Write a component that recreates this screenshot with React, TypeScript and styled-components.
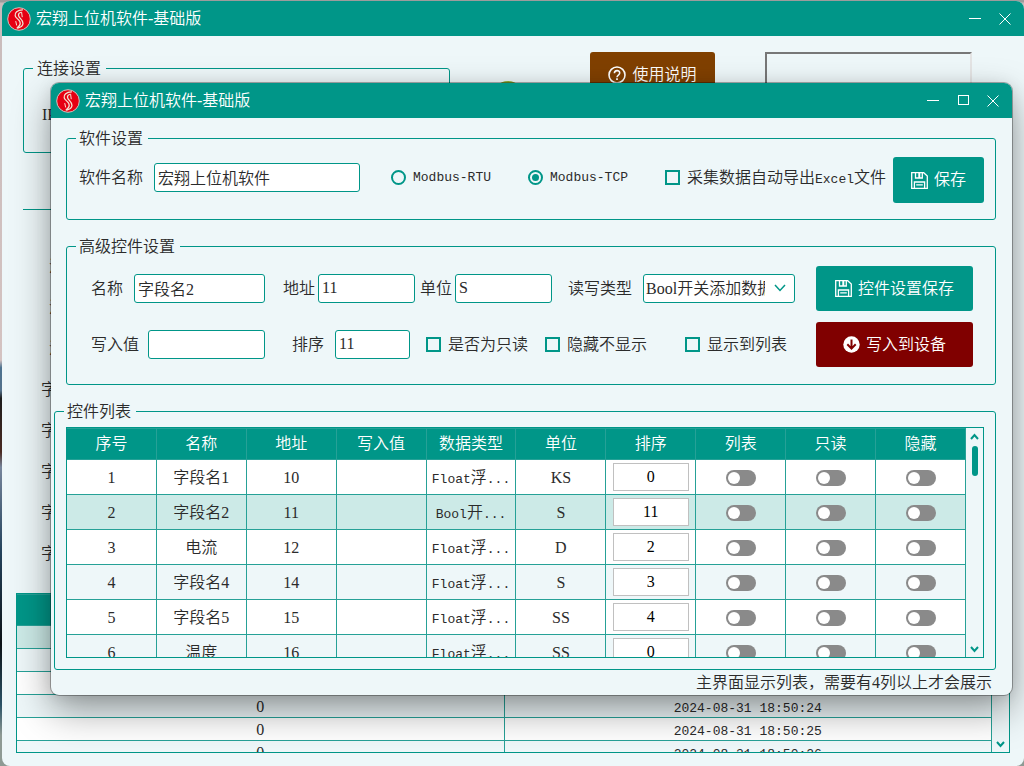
import React from "react";
import styled, { createGlobalStyle } from "styled-components";

const teal = "#009688";
const line = "#26a197";
const paper = "#eef7f9";
const tint = "#cceae7";
const ink = "#2b2b2b";

const GlobalStyle = createGlobalStyle`
  * { box-sizing: border-box; }
  body { margin: 0; }
  body, button, input, select {
    font-family: "Liberation Serif", "Noto Sans CJK SC", serif;
    font-size: 16px;
    font-weight: 350;
    line-height: 20px;
    color: ${ink};
  }
`;

const Desktop = styled.div`
  min-height: 100vh;
  padding: 1px 0 0 2px;
  display: flex;
  background: linear-gradient(#9c9c9c 0 2px, #c9bcbc 3px, #d4c3c1 47%, #4d7390 48%, #54718a 51%, #1d1d1d 52%, #4a2b22 59%, #77869c 61%, #24435c 72%, #0c1216 84%, #2b5266 92%, #8e9a94 96%);
`;

const MainWindow = styled.main`
  position: relative;
  flex: 1;
  min-width: 0;
  height: calc(100vh - 1px);
  display: flex;
  flex-direction: column;
  overflow: hidden;
  border-radius: 8px;
  background: ${paper};
`;

const Dialog = styled.section`
  position: absolute;
  top: 82px;
  left: 49px;
  right: 12px;
  border-radius: 8px;
  background: ${paper};
  box-shadow: 0 0 0 1px rgba(0, 0, 0, 0.3), 0 16px 38px rgba(0, 0, 0, 0.38), 0 2px 16px rgba(0, 0, 0, 0.1);
  & > header { border-radius: 8px 8px 0 0; }
`;

const TitleBar = styled.header`
  flex: none;
  height: 35px;
  padding: 0 4px 0 5px;
  display: flex;
  align-items: center;
  gap: 5px;
  background: ${teal};
  color: #ffffff;
`;

const Title = styled.h1`
  flex: 1;
  margin: 0;
  font-size: 16px;
  font-weight: 350;
  line-height: 20px;
`;

const CaptionButtons = styled.div`
  display: flex;
`;

const CaptionButton = styled.button`
  width: 30px;
  height: 30px;
  padding: 0;
  display: grid;
  place-items: center;
  border: 0;
  background: none;
  color: #ffffff;
`;

const Group = styled.fieldset<{ $top: number; $bottom: number; $wide?: boolean }>`
  min-width: 0;
  margin: 0 0 16px ${(p) => (p.$wide ? 0 : 12)}px;
  padding: ${(p) => p.$top}px 11px ${(p) => p.$bottom}px;
  border: 1px solid ${teal};
  border-radius: 3px;
`;

const Legend = styled.legend`
  margin-left: -2px;
  padding: 0 5px 0 3px;
  line-height: 21px;
`;

const DialogBody = styled.div`
  padding: 10px 16px 0 3px;
  & > fieldset:last-of-type { margin-bottom: 0; }
`;

const Row = styled.div`
  min-width: 0;
  display: flex;
  align-items: center;
`;

const SoftwareRow = styled.div`
  display: flex;
  align-items: flex-start;
  gap: 6px;
  padding-left: 1px;
  & > ${Row} {
    flex: 1;
    height: 41px;
  }
`;

const AdvancedGrid = styled.div`
  display: grid;
  grid-template-columns: minmax(0, 1fr) 157px;
  column-gap: 21px;
  row-gap: 11px;
  padding: 0 11px 0 13px;
`;

const Caption = styled.label<{ $gap: number; $after: number }>`
  flex: none;
  margin-left: ${(p) => p.$gap}px;
  margin-right: ${(p) => p.$after}px;
  white-space: nowrap;
`;

const TextField = styled.input<{ $w: number }>`
  flex: ${(p) => p.$w} 1 ${(p) => p.$w}px;
  width: ${(p) => p.$w}px;
  min-width: 0;
  height: 29px;
  padding: 0 3px 1px;
  border: 1px solid ${teal};
  border-radius: 3px;
  background: #ffffff;
`;

const SelectWrap = styled.div`
  position: relative;
  flex: 152 1 152px;
  min-width: 0;
  svg { position: absolute; right: 9px; top: 10px; pointer-events: none; }
`;

const Select = styled.select`
  display: block;
  width: 100%;
  height: 29px;
  padding: 0 29px 0 2px;
  appearance: none;
  border: 1px solid ${teal};
  border-radius: 3px;
  background: #ffffff;
`;

const Choice = styled.label<{ $w: number; $gap: number }>`
  flex: none;
  width: ${(p) => p.$w}px;
  margin-left: ${(p) => p.$gap}px;
  display: flex;
  align-items: center;
  gap: 7px;
  white-space: nowrap;
`;

const Radio = styled.input`
  width: 15px;
  height: 15px;
  margin: 0;
  display: grid;
  place-items: center;
  appearance: none;
  border: 2px solid ${teal};
  border-radius: 50%;
  &:checked::before {
    content: "";
    width: 7px;
    height: 7px;
    border-radius: 50%;
    background: ${teal};
  }
`;

const Tick = styled.input`
  width: 15px;
  height: 15px;
  margin: 0;
  appearance: none;
  border: 2px solid ${teal};
  &:checked { background: ${teal}; }
`;

const Mono = styled.span`
  font-family: "Liberation Mono", monospace;
  font-size: 13px;
  line-height: 1;
`;

const ActionButton = styled.button<{ $color: string; $w?: number; $h: number }>`
  flex: none;
  width: ${(p) => (p.$w ? `${p.$w}px` : "100%")};
  height: ${(p) => p.$h}px;
  padding: 0;
  display: flex;
  align-items: center;
  justify-content: center;
  gap: 6px;
  border: 0;
  border-radius: 3px;
  background: ${(p) => p.$color};
  color: #ffffff;
`;

const TableFrame = styled.div<{ $h?: number }>`
  display: flex;
  min-height: 0;
  height: ${(p) => (p.$h ? `${p.$h}px` : "auto")};
  border: 1px solid ${teal};
  overflow: hidden;
`;

const TableView = styled.div`
  flex: 1;
  min-width: 0;
  overflow: hidden;
`;

const Table = styled.table<{ $row: number }>`
  width: 100%;
  table-layout: fixed;
  border-collapse: separate;
  border-spacing: 0;
  text-align: center;
  th, td {
    height: ${(p) => p.$row}px;
    padding: 0;
    border-right: 1px solid ${line};
    border-bottom: 1px solid ${line};
    font-weight: 350;
    white-space: nowrap;
  }
  td { padding-top: 1px; }
  th {
    height: 32px;
    border-top: 1px solid ${line};
    background: ${teal};
    color: #ffffff;
  }
`;

const LogTable = styled(Table)`
  td { line-height: 18px; }
`;

const TableRow = styled.tr<{ $bg: string }>`
  background: ${(p) => p.$bg};
`;

const OrderField = styled.input`
  display: block;
  width: calc(100% - 13px);
  height: 28px;
  margin: 0 auto 2px;
  padding: 0;
  border: 1px solid #c0c0c0;
  background: #ffffff;
  color: #000000;
  text-align: center;
`;

const Switch = styled.input`
  display: block;
  width: 30px;
  height: 16px;
  margin: 0 auto;
  padding: 2px;
  appearance: none;
  border-radius: 8px;
  background: #8a8a8a;
  &::before {
    content: "";
    display: block;
    width: 12px;
    height: 12px;
    border-radius: 50%;
    background: #ffffff;
  }
  &:checked { background: ${teal}; }
  &:checked::before { margin-left: 14px; }
`;

const ScrollRail = styled.div`
  flex: none;
  width: 17px;
  padding: 5px 0 4px;
  display: flex;
  flex-direction: column;
  align-items: center;
  gap: 5px;
  background: ${paper};
`;

const ScrollThumb = styled.div`
  width: 6px;
  height: 30px;
  margin-bottom: auto;
  border-radius: 3px;
  background: ${teal};
`;

const ScrollButton = styled.button`
  width: 17px;
  height: 8px;
  padding: 0;
  display: grid;
  place-items: center;
  border: 0;
  background: none;
`;

const Note = styled.p`
  margin: 0;
  padding-right: 4px;
  line-height: 25px;
  text-align: right;
`;

const ConnectionBar = styled.div`
  flex: none;
  height: 173px;
  margin: 0 52px 0 21px;
  padding-top: 16px;
  display: flex;
  align-items: flex-start;
`;

const ConnectionGroup = styled.fieldset`
  flex: none;
  width: 427px;
  height: 95px;
  margin: 6px 0 0;
  padding: 26px 18px 0;
  border: 1px solid ${teal};
  border-radius: 3px;
`;

const ConnectionLegend = styled.legend`
  margin-left: -9px;
  padding: 0 5px 0 4px;
  line-height: 21px;
`;

const StatusLamp = styled.span`
  flex: none;
  width: 32px;
  height: 32px;
  margin: 29px 66px 0 42px;
  border-radius: 50%;
  background: #8fae35;
`;

const SunkenPanel = styled.div`
  flex: 1;
  height: 120px;
  margin-left: 50px;
  border: 2px solid;
  border-color: #777777 #e4e4e4 #e4e4e4 #777777;
`;

const Divider = styled.hr`
  flex: none;
  width: auto;
  height: 1px;
  margin: 0 14px 0 21px;
  border: 0;
  background: ${teal};
`;

const FieldNames = styled.ul`
  flex: none;
  margin: 0;
  padding: 36px 0 19px 39px;
  list-style: none;
  line-height: 41px;
`;

const FieldName = styled.li<{ $indent: number }>`
  height: 41px;
  padding-left: ${(p) => p.$indent}px;
`;

const LogFrame = styled(TableFrame)`
  flex: 1;
  margin: 0 14px 13px;
`;

const LogRail = styled(ScrollRail)`
  justify-content: flex-end;
`;

function Logo() {
  return (
    <svg width="24" height="24" viewBox="0 0 24 24" aria-hidden="true">
      <circle cx="12" cy="12" r="11.3" fill="#e60012" stroke="#cfc4c0" strokeWidth="1" />
      <g fill="none" stroke="#f3e3d3" strokeWidth="1.3" strokeLinecap="round">
        <path d="M15.5 2.8C10.5 3 7.4 5.6 8.2 8.8c.6 2.200 3.600 3.600 4.600 5.800.9 2-.3 4.600-2.600 6.200" />
        <path d="M13.500 5.500c-2 .6-2.600 2.600-1.400 4.400 1.300 2 4.100 3.600 3.900 6.600-.2 2.200-2.200 3.800-5.200 4.500" />
        <path d="M14.600 5.200l.6 4.600M8.800 14.500l.8 3.600" strokeWidth="1" />
      </g>
    </svg>
  );
}

function SaveIcon() {
  return (
    <svg width="17" height="17" viewBox="0 0 17 17" fill="none" stroke="#fff" strokeWidth="1.3" aria-hidden="true">
      <path d="M.7.7h12L16.300 4v12.300H.7z" />
      <path d="M4.500.7v5.300h6.800v-5.300" />
      <path d="M3.400 16.200V10h10.200v6.200M5.200 12.800h6.600" />
      <path d="M8.300 1v5" strokeWidth="2" />
    </svg>
  );
}

function DownIcon() {
  return (
    <svg width="17" height="17" viewBox="0 0 17 17" fill="none" aria-hidden="true">
      <circle cx="8.5" cy="8.5" r="8.2" fill="#fff" />
      <path d="M8.500 3.500v8.600M4.300 8.300l4.200 4.300 4.200-4.300" stroke="#800000" strokeWidth="2" />
    </svg>
  );
}

function HelpIcon() {
  return (
    <svg width="18" height="18" viewBox="0 0 18 18" fill="none" stroke="#fff" strokeWidth="1.6" aria-hidden="true">
      <circle cx="9" cy="9" r="8" />
      <path d="M6.400 7.200c0-3.400 5.300-3.400 5.300-.2 0 2-2.700 2.100-2.700 4.300" />
      <path d="M9 12.300v1.800" strokeWidth="1.8" />
    </svg>
  );
}

function Chevron({ size, up }: { size: number; up?: boolean }) {
  return (
    <svg width={size} height="8" viewBox={`0 0 ${size} 8`} fill="none" stroke={teal} strokeWidth={size > 10 ? 1.5 : 2} aria-hidden="true">
      <path d={up ? `M1 6L${size / 2} 2L${size - 1} 6` : size > 10 ? `M1 1L${size / 2} 6.5L${size - 1} 1` : `M1 2L${size / 2} 6L${size - 1} 2`} />
    </svg>
  );
}

function WindowTitle({ resizable }: { resizable?: boolean }) {
  return (
    <TitleBar>
      <Logo />
      <Title>宏翔上位机软件-基础版</Title>
      <CaptionButtons>
        <CaptionButton aria-label="最小化">
          <svg width="12" height="12" stroke="currentColor"><path d="M0 5.500H12" /></svg>
        </CaptionButton>
        {resizable && (
          <CaptionButton aria-label="最大化">
            <svg width="12" height="12" stroke="currentColor" fill="none"><rect x="1.5" y="0.5" width="10" height="9" /></svg>
          </CaptionButton>
        )}
        <CaptionButton aria-label="关闭">
          <svg width="12" height="12" stroke="currentColor"><path d="M.5.5l11 11M11.500.5l-11 11" /></svg>
        </CaptionButton>
      </CaptionButtons>
    </TitleBar>
  );
}

const headings = ["序号", "名称", "地址", "写入值", "数据类型", "单位", "排序", "列表", "只读", "隐藏"];

const controls = [
  { name: "字段名1", address: 10, type: ["Float", "浮"], unit: "KS", order: 0 },
  { name: "字段名2", address: 11, type: ["Bool", "开"], unit: "S", order: 11 },
  { name: "电流", address: 12, type: ["Float", "浮"], unit: "D", order: 2 },
  { name: "字段名4", address: 14, type: ["Float", "浮"], unit: "S", order: 3 },
  { name: "字段名5", address: 15, type: ["Float", "浮"], unit: "SS", order: 4 },
  { name: "温度", address: 16, type: ["Float", "浮"], unit: "SS", order: 0 },
];

const log = [
  ["", ""],
  ["", ""],
  ["", ""],
  ["0", "2024-08-31 18:50:24"],
  ["0", "2024-08-31 18:50:25"],
  ["0", "2024-08-31 18:50:26"],
];

const fieldNames = ["温", "温", "温", "字", "字", "字", "字", "字"];

function SoftwareSettings() {
  return (
    <Group $top={8} $bottom={16}>
      <Legend>软件设置</Legend>
      <SoftwareRow>
        <Row>
          <Caption htmlFor="app-name" $gap={0} $after={11}>软件名称</Caption>
          <TextField id="app-name" $w={206} defaultValue="宏翔上位机软件" />
          <Choice $w={103} $gap={31}>
            <Radio type="radio" name="protocol" /><Mono>Modbus-RTU</Mono>
          </Choice>
          <Choice $w={103} $gap={34}>
            <Radio type="radio" name="protocol" defaultChecked /><Mono>Modbus-TCP</Mono>
          </Choice>
          <Choice $w={222} $gap={34}>
            <Tick type="checkbox" />
            <span>采集数据自动导出<Mono>Excel</Mono>文件</span>
          </Choice>
        </Row>
        <ActionButton $color={teal} $w={91} $h={46}><SaveIcon />保存</ActionButton>
      </SoftwareRow>
    </Group>
  );
}

function AdvancedSettings() {
  return (
    <Group $top={9} $bottom={17}>
      <Legend>高级控件设置</Legend>
      <AdvancedGrid>
        <Row>
          <Caption htmlFor="name" $gap={0} $after={11}>名称</Caption>
          <TextField id="name" $w={131} defaultValue="字段名2" />
          <Caption htmlFor="address" $gap={18} $after={3}>地址</Caption>
          <TextField id="address" $w={97} defaultValue="11" />
          <Caption htmlFor="unit" $gap={5} $after={3}>单位</Caption>
          <TextField id="unit" $w={97} defaultValue="S" />
          <Caption htmlFor="access" $gap={16} $after={11}>读写类型</Caption>
          <SelectWrap>
            <Select id="access"><option>Bool开关添加数据</option></Select>
            <Chevron size={12} />
          </SelectWrap>
        </Row>
        <ActionButton $color={teal} $h={45}><SaveIcon />控件设置保存</ActionButton>
        <Row>
          <Caption htmlFor="value" $gap={0} $after={9}>写入值</Caption>
          <TextField id="value" $w={117} />
          <Caption htmlFor="order" $gap={27} $after={11}>排序</Caption>
          <TextField id="order" $w={75} defaultValue="11" />
          <Choice $w={102} $gap={16}><Tick type="checkbox" />是否为只读</Choice>
          <Choice $w={102} $gap={17}><Tick type="checkbox" />隐藏不显示</Choice>
          <Choice $w={110} $gap={38}><Tick type="checkbox" />显示到列表</Choice>
        </Row>
        <ActionButton $color="#800000" $h={45}><DownIcon />写入到设备</ActionButton>
      </AdvancedGrid>
    </Group>
  );
}

function ControlList() {
  return (
    <Group $top={5} $bottom={11} $wide>
      <Legend>控件列表</Legend>
      <TableFrame $h={231}>
        <TableView>
          <Table $row={35}>
            <thead>
              <tr>{headings.map((h) => <th key={h}>{h}</th>)}</tr>
            </thead>
            <tbody>
              {controls.map((c, i) => (
                <TableRow key={c.address} $bg={i === 1 ? tint : i % 2 ? paper : "#ffffff"}>
                  <td>{i + 1}</td>
                  <td>{c.name}</td>
                  <td>{c.address}</td>
                  <td />
                  <td><Mono>{c.type[0]}</Mono>{c.type[1]}<Mono>...</Mono></td>
                  <td>{c.unit}</td>
                  <td><OrderField aria-label={`排序 ${i + 1}`} defaultValue={c.order} /></td>
                  {headings.slice(7).map((h) => (
                    <td key={h}><Switch type="checkbox" aria-label={`${h} ${i + 1}`} /></td>
                  ))}
                </TableRow>
              ))}
            </tbody>
          </Table>
        </TableView>
        <ScrollRail>
          <ScrollButton aria-label="向上滚动"><Chevron size={9} up /></ScrollButton>
          <ScrollThumb />
          <ScrollButton aria-label="向下滚动"><Chevron size={9} /></ScrollButton>
        </ScrollRail>
      </TableFrame>
    </Group>
  );
}

export default function App() {
  return (
    <Desktop>
      <GlobalStyle />
      <MainWindow>
        <WindowTitle />
        <ConnectionBar>
          <ConnectionGroup>
            <ConnectionLegend>连接设置</ConnectionLegend>
            IP
          </ConnectionGroup>
          <StatusLamp />
          <ActionButton $color="#804000" $w={125} $h={45}><HelpIcon />使用说明</ActionButton>
          <SunkenPanel />
        </ConnectionBar>
        <Divider />
        <FieldNames>
          {fieldNames.map((n, i) => <FieldName key={i} $indent={n === "字" ? 0 : 8}>{n}</FieldName>)}
        </FieldNames>
        <LogFrame>
          <TableView>
            <LogTable $row={23}>
              <thead><tr><th /><th /></tr></thead>
              <tbody>
                {log.map(([value, time], i) => (
                  <TableRow key={i} $bg={i === 0 ? tint : i % 2 ? paper : "#ffffff"}>
                    <td>{value}</td>
                    <td><Mono>{time}</Mono></td>
                  </TableRow>
                ))}
              </tbody>
            </LogTable>
          </TableView>
          <LogRail>
            <ScrollButton aria-label="向下滚动"><Chevron size={9} /></ScrollButton>
          </LogRail>
        </LogFrame>
        <Dialog role="dialog" aria-label="宏翔上位机软件-基础版">
          <WindowTitle resizable />
          <DialogBody>
            <SoftwareSettings />
            <AdvancedSettings />
            <ControlList />
            <Note>主界面显示列表，需要有4列以上才会展示</Note>
          </DialogBody>
        </Dialog>
      </MainWindow>
    </Desktop>
  );
}
